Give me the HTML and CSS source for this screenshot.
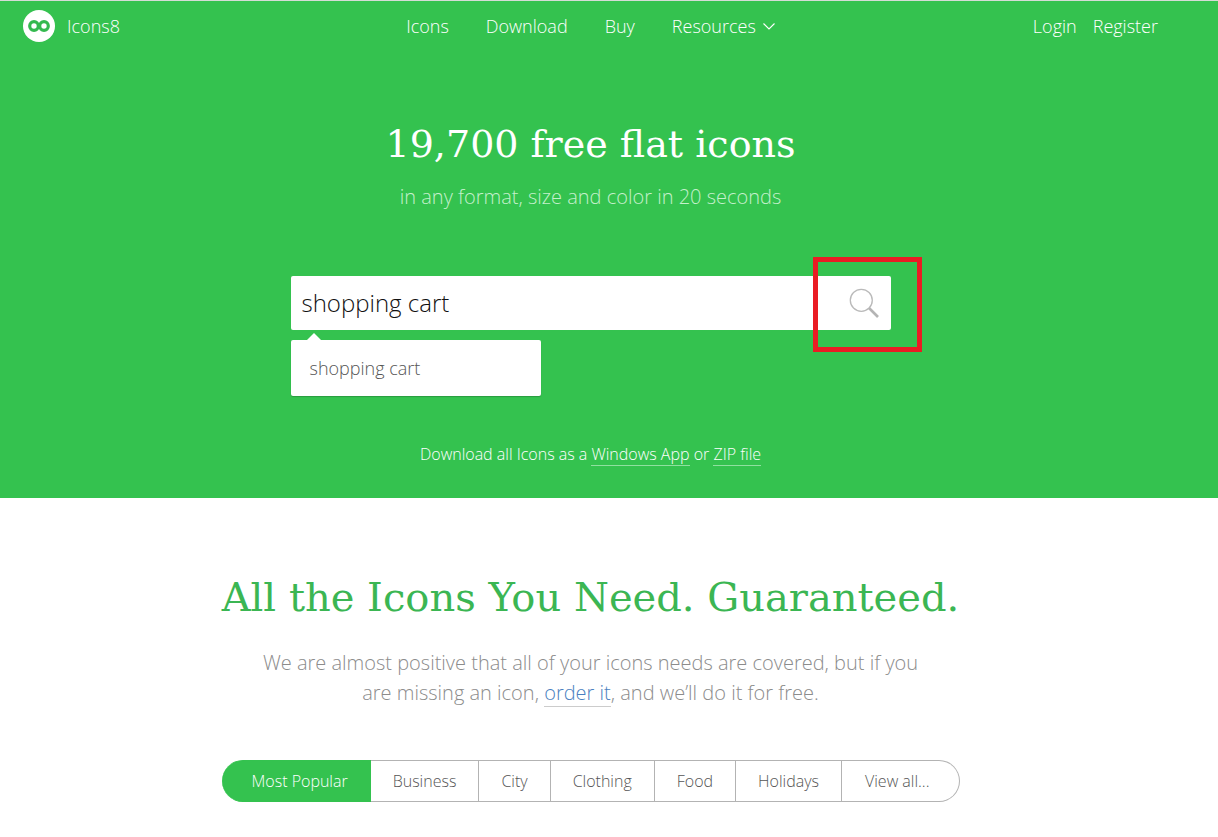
FILE: index.html
```html
<!DOCTYPE html>
<html lang="en">
<head>
    <meta charset="UTF-8">
    <title>Icons8</title>
    <link rel="stylesheet" href="styles.css">
</head>
<body>

    <div class="top">
        <header class="header">
            <a href="#" class="logo">
                <svg width="32" height="32" viewBox="0 0 32 32" aria-hidden="true">
                    <circle cx="16" cy="16" r="16" fill="#fff"/>
                    <circle cx="11" cy="16" r="4.3" fill="none" stroke="#34b94f" stroke-width="3.2"/>
                    <circle cx="21" cy="16" r="4.3" fill="none" stroke="#34b94f" stroke-width="3.2"/>
                </svg>
                Icons8
            </a>
            <nav class="menu">
                <a href="#">Icons</a>
                <a href="#">Download</a>
                <a href="#">Buy</a>
                <a href="#" class="dropdown">Resources
                    <svg width="12" height="8" viewBox="0 0 12 8" aria-hidden="true">
                        <path d="M0.5 1.5 L6 7 L11.5 1.5" fill="none" stroke="#fff" stroke-width="1.1"/>
                    </svg>
                </a>
            </nav>
            <div class="account">
                <a href="#">Login</a>
                <a href="#">Register</a>
            </div>
        </header>

        <section class="hero">
            <h1>19,700 free flat icons</h1>
            <p class="tagline">in any format, size and color in 20 seconds</p>

            <form class="search">
                <div class="search-row">
                    <input type="text" class="search-input" aria-label="Search icons" value="shopping cart">
                    <button type="button" class="search-btn" aria-label="Search">
                        <svg width="32" height="32" viewBox="0 0 32 32" aria-hidden="true">
                            <circle cx="13.3" cy="13.3" r="11" fill="none" stroke="#bababa" stroke-width="1.3"/>
                            <path d="M21 21 L30 30" stroke="#b4b4b4" stroke-width="2.6"/>
                        </svg>
                    </button>
                    <!-- Red frame around the search button -->
                    <span class="highlight"></span>
                </div>
                <div class="suggest">
                    <a href="#">shopping cart</a>
                </div>
            </form>

            <p class="download">Download all Icons as a <a href="#">Windows App</a> or <a href="#">ZIP file</a></p>
        </section>
    </div>

    <section class="need">
        <h2>All the Icons You Need. Guaranteed.</h2>
        <p class="about">We are almost positive that all of your icons needs are covered, but if you are missing an icon, <a href="#">order it</a>, and we’ll do it for free.</p>

        <div class="tabs">
            <button class="active">Most Popular</button>
            <button>Business</button>
            <button>City</button>
            <button>Clothing</button>
            <button>Food</button>
            <button>Holidays</button>
            <button>View all...</button>
        </div>
    </section>

</body>
</html>
```
FILE: styles.css
```css
* {
    box-sizing: border-box;
}

body {
    margin: 0;
    background: #fff;
    font-family: "Open Sans", sans-serif;
    font-weight: 300;
}

a {
    color: inherit;
    text-decoration: none;
}

h1, h2 {
    margin: 0;
    font-family: "DejaVu Serif", serif;
    font-weight: 400;
    line-height: 56px;
}

p {
    margin: 0;
}

/* Green part: header and search */
.top {
    background: #34c24f;
    color: #fff;
    border-top: 1px solid #d5dcd6;
    padding-right: 37px;
}

.header {
    display: grid;
    grid-template-columns: 1fr auto 1fr;
    align-items: center;
    height: 50px;
    padding: 0 23px;
    font-size: 18px;
}

.logo {
    display: flex;
    align-items: center;
    gap: 12px;
}

.menu {
    display: flex;
    gap: 37px;
}

.dropdown {
    display: flex;
    align-items: center;
    gap: 7px;
}

.account {
    display: flex;
    justify-content: flex-end;
    gap: 16px;
}

.hero {
    display: flex;
    flex-direction: column;
    align-items: center;
    padding: 65px 20px 32px;
}

h1 {
    font-size: 38px;
}

.tagline {
    margin-top: 10px;
    font-size: 20px;
    line-height: 30px;
    color: #c4f0cc;
}

.search {
    width: 100%;
    max-width: 600px;
    margin-top: 64px;
}

.search-row {
    position: relative;
    display: flex;
    height: 54px;
    background: #fff;
    border-radius: 2px;
}

.search-input {
    flex: 1;
    min-width: 0;
    padding: 0 11px 2px;
    border: none;
    outline: none;
    background: none;
    color: #111;
    font: inherit;
    font-size: 24px;
}

.search-btn {
    width: 54px;
    padding: 0;
    border: none;
    background: none;
    cursor: pointer;
}

.search-btn svg {
    display: block;
    margin: auto;
}

.highlight {
    position: absolute;
    top: -19px;
    right: -31px;
    width: 109px;
    height: 95px;
    border: 5px solid #ea1c24;
    pointer-events: none;
}

.suggest {
    position: relative;
    width: 250px;
    margin-top: 10px;
    padding: 14px 19px;
    background: #fff;
    border-radius: 2px;
    box-shadow: 0 1px 1px rgba(0, 0, 0, 0.2);
    color: #555;
    font-size: 18px;
    line-height: 28px;
}

.suggest a {
    display: block;
}

/* Little arrow of the suggestions */
.suggest::before {
    content: "";
    position: absolute;
    top: -7px;
    left: 16px;
    border: 7px solid transparent;
    border-top: none;
    border-bottom-color: #fff;
}

.download {
    margin-top: 46px;
    font-size: 16px;
    line-height: 24px;
}

.download a {
    border-bottom: 1px solid #8fe09f;
}

/* White part */
.need {
    display: flex;
    flex-direction: column;
    align-items: center;
    padding: 71px 57px 35px 20px;
}

h2 {
    color: #3bb653;
    font-size: 40px;
    text-align: center;
}

.about {
    max-width: 680px;
    margin-top: 23px;
    color: #8c8c8c;
    font-size: 20px;
    line-height: 30px;
    text-align: center;
}

.about a {
    color: #4b7fc0;
    border-bottom: 1px solid #ccc;
}

.tabs {
    display: flex;
    margin-top: 52px;
}

.tabs button {
    height: 42px;
    padding: 0 22px;
    border: 1px solid #b3b3b3;
    border-left: none;
    background: #fff;
    color: #555;
    font: inherit;
    font-size: 16px;
    cursor: pointer;
}

.tabs button:first-child {
    padding-left: 30px;
    border-radius: 21px 0 0 21px;
}

.tabs button:last-child {
    padding-left: 23px;
    padding-right: 29px;
    border-radius: 0 21px 21px 0;
}

.tabs .active {
    background: #34c24f;
    border-color: #34c24f;
    color: #fff;
}
```
